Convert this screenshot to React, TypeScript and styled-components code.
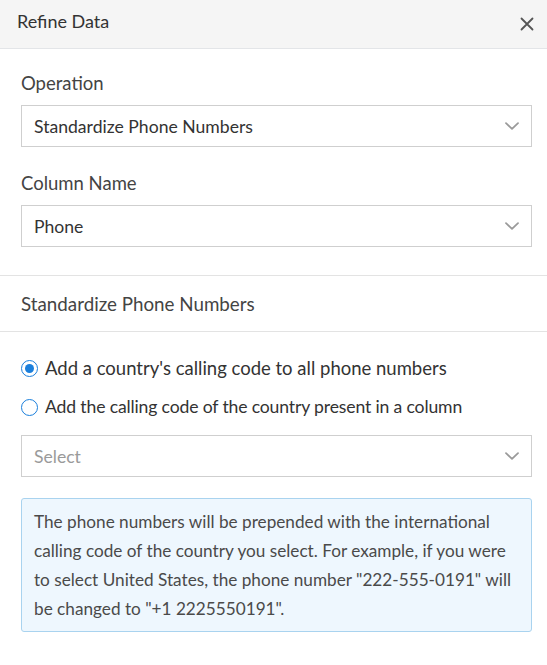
import React from "react";
import styled, { createGlobalStyle } from "styled-components";

const Global = createGlobalStyle`
  html, body { margin: 0; padding: 0; background: #fff; }
  body { font-family: Lato, "Open Sans", Arial, sans-serif; color: #333; }
  * { box-sizing: border-box; }
`;

const Panel = styled.div`
  width: 547px;
  display: flex;
  flex-direction: column;
`;

const Header = styled.div`
  height: 49px;
  background: #f5f5f5;
  border-bottom: 1px solid #e3e5e8;
  display: flex;
  align-items: center;
  justify-content: space-between;
  padding: 0 13px 1px 17px;
`;

const Title = styled.div`
  font-size: 18px;
  line-height: 24px;
  color: #333;
  margin-bottom: 5px;
`;

const CloseBtn = styled.button`
  border: 0;
  background: none;
  padding: 0;
  width: 14px;
  height: 14px;
  display: flex;
  align-items: center;
  justify-content: center;
  cursor: pointer;
`;

const Section = styled.div<{ $top?: number; $bottom?: number }>`
  padding: ${(p) => p.$top ?? 0}px 15px ${(p) => p.$bottom ?? 0}px 21px;
  display: flex;
  flex-direction: column;
`;

const Label = styled.div<{ $mt?: number }>`
  font-size: 18.5px;
  line-height: 24px;
  color: #444;
  margin-top: ${(p) => p.$mt ?? 0}px;
  margin-bottom: 10px;
`;

const SelectBox = styled.div<{ $placeholder?: boolean; $mt?: number }>`
  height: 42px;
  border: 1px solid #cfcfcf;
  display: flex;
  align-items: center;
  justify-content: space-between;
  padding: 0 12px 0 12px;
  font-size: 17.6px;
  color: ${(p) => (p.$placeholder ? "#9a9a9a" : "#333")};
  margin-top: ${(p) => p.$mt ?? 0}px;
  background: #fff;
`;

const SubHeading = styled.div`
  border-top: 1px solid #e3e3e3;
  border-bottom: 1px solid #e3e3e3;
  height: 57px;
  display: flex;
  align-items: center;
  padding: 0 21px 1px;
  font-size: 18.8px;
  color: #444;
`;

const RadioRow = styled.label<{ $mt?: number; $tight?: boolean }>`
  display: flex;
  align-items: center;
  gap: 7px;
  font-size: ${(p) => (p.$tight ? "17.6px" : "18.5px")};
  letter-spacing: ${(p) => (p.$tight ? "-0.15px" : "0")};
  line-height: 24px;
  color: #333;
  margin-top: ${(p) => p.$mt ?? 0}px;
`;

const RadioDot = styled.span<{ $checked?: boolean }>`
  width: 17px;
  height: 17px;
  border-radius: 50%;
  border: 1.5px solid #1a7fdc;
  display: inline-flex;
  align-items: center;
  justify-content: center;
  flex-shrink: 0;
  &::after {
    content: "";
    width: 9px;
    height: 9px;
    border-radius: 50%;
    background: ${(p) => (p.$checked ? "#1a7fdc" : "transparent")};
  }
`;

const InfoBox = styled.div`
  margin-top: 21px;
  background: #eef7fe;
  border: 1px solid #a9d3ef;
  border-radius: 3px;
  padding: 8px 12px 8px 12px;
  font-size: 17.2px;
  line-height: 29px;
  color: #4a4a4a;
`;

const Chevron = () => (
  <svg width="14" height="8" viewBox="0 0 14 8" fill="none">
    <path d="M1 1.2 L7 6.8 L13 1.2" stroke="#9a9a9a" strokeWidth="1.8" strokeLinecap="round" strokeLinejoin="round" />
  </svg>
);

const CloseIcon = () => (
  <svg width="14" height="14" viewBox="0 0 14 14" fill="none">
    <path d="M1.5 1.5 L12.5 12.5 M12.5 1.5 L1.5 12.5" stroke="#555" strokeWidth="1.8" strokeLinecap="round" />
  </svg>
);

export default function App() {
  return (
    <Panel>
      <Global />
      <Header>
        <Title>Refine Data</Title>
        <CloseBtn aria-label="Close">
          <CloseIcon />
        </CloseBtn>
      </Header>
      <Section $top={0} $bottom={28}>
        <Label $mt={22}>Operation</Label>
        <SelectBox>
          <span>Standardize Phone Numbers</span>
          <Chevron />
        </SelectBox>
        <Label $mt={24}>Column Name</Label>
        <SelectBox>
          <span>Phone</span>
          <Chevron />
        </SelectBox>
      </Section>
      <SubHeading>Standardize Phone Numbers</SubHeading>
      <Section $top={24} $bottom={20}>
        <RadioRow>
          <RadioDot $checked />
          Add a country's calling code to all phone numbers
        </RadioRow>
        <RadioRow $mt={15} $tight>
          <RadioDot />
          Add the calling code of the country present in a column
        </RadioRow>
        <SelectBox $placeholder $mt={16}>
          <span>Select</span>
          <Chevron />
        </SelectBox>
        <InfoBox>
          The phone numbers will be prepended with the international calling code of the country you select. For example, if you were to select United States, the phone number "222-555-0191" will be changed to "+1 2225550191".
        </InfoBox>
      </Section>
    </Panel>
  );
}
